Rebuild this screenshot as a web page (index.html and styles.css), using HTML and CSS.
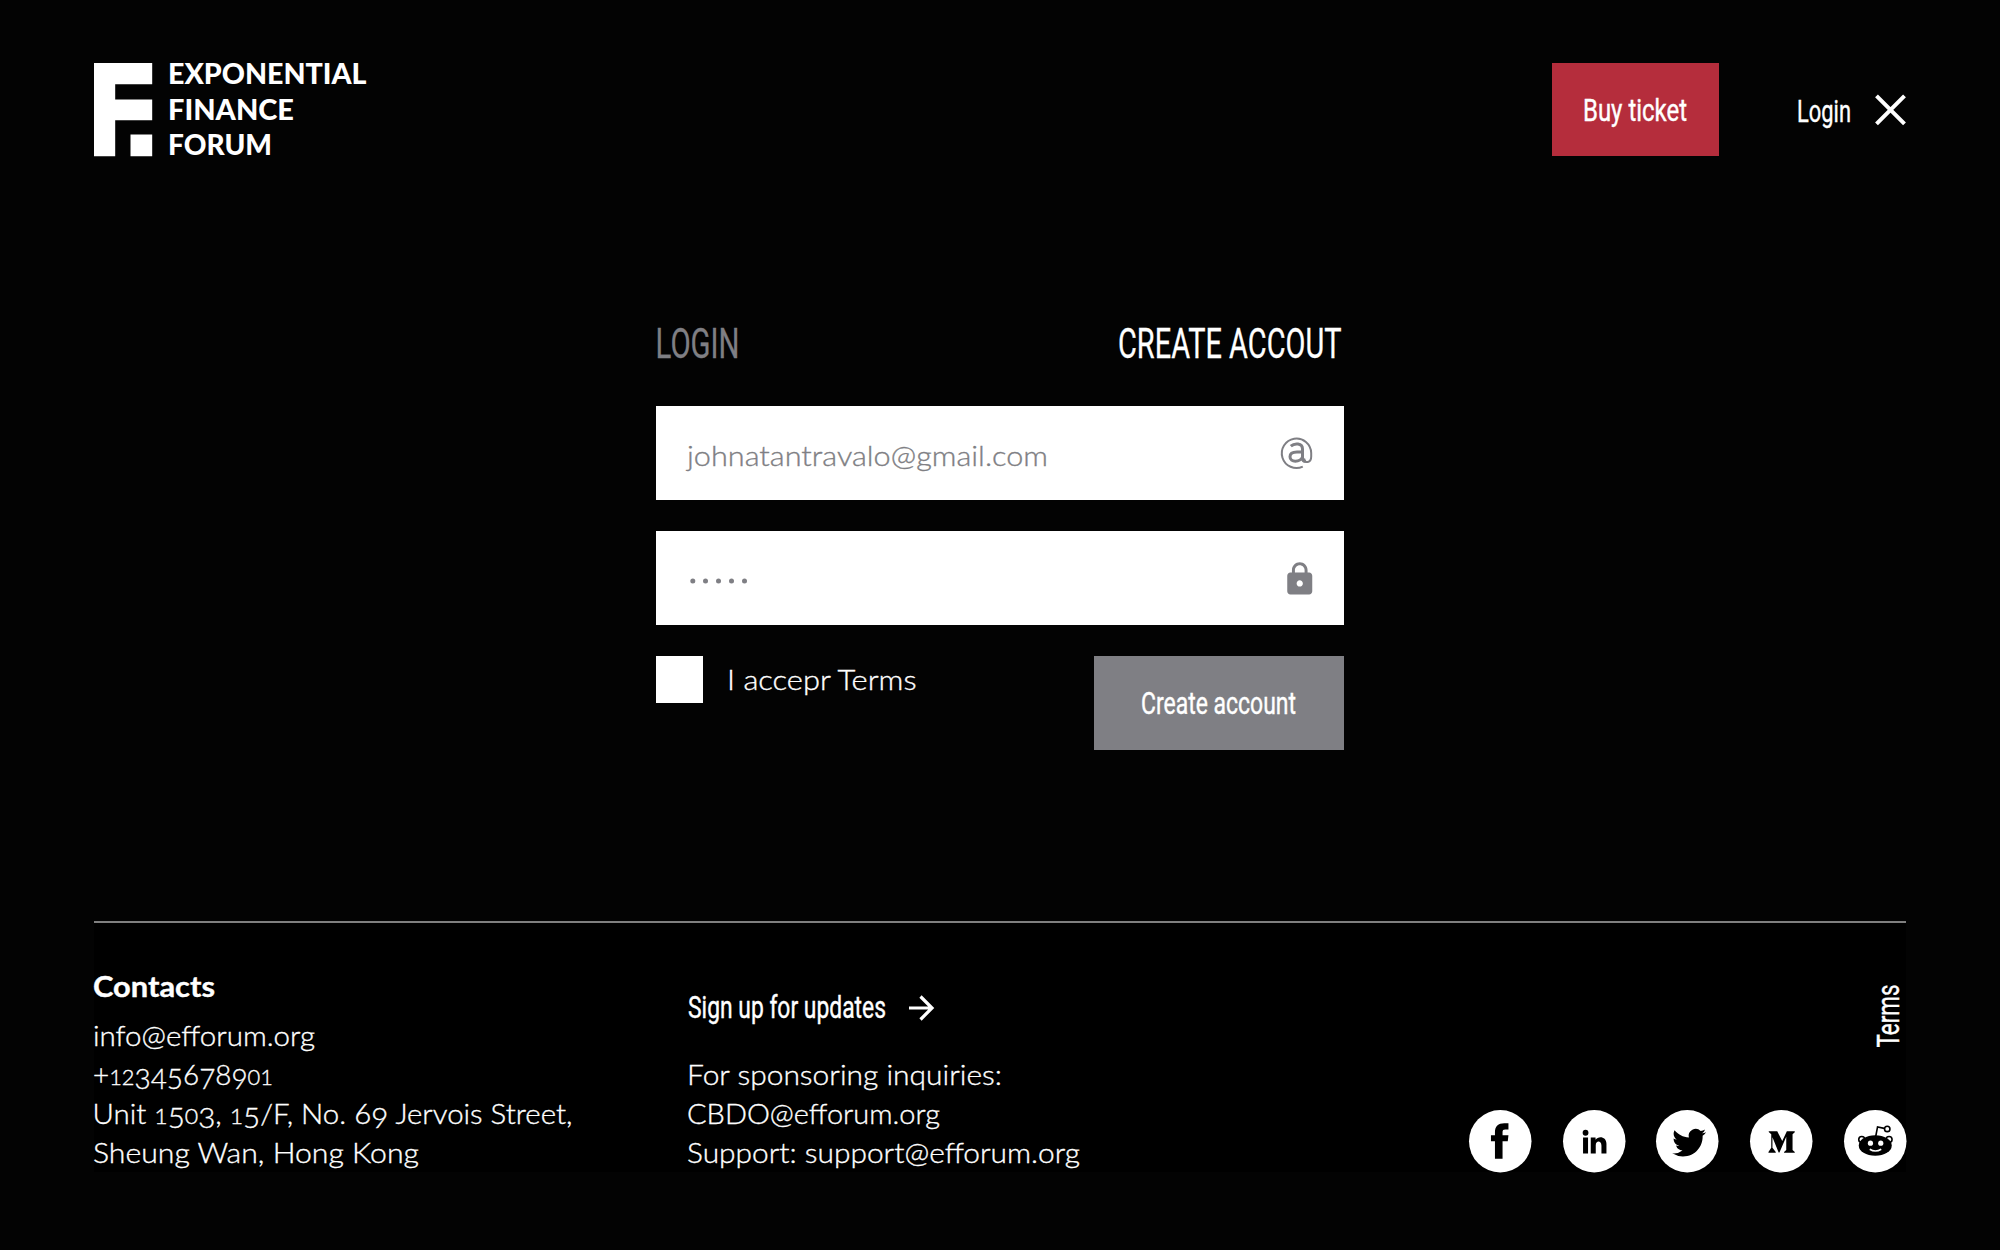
FILE: index.html
```html
<!DOCTYPE html>
<html lang="en">
<head>
<meta charset="utf-8">
<title>Exponential Finance Forum</title>
<link rel="stylesheet" href="styles.css">
</head>
<body>
<header class="header">
  <svg class="logo" width="280" height="94" viewBox="0 0 280 94">
    <path d="M0 0H58.2V21.3H21.2V36.5H58.2V57.2H21.2V93.200H0ZM36.500 71.500H58.200V93.200H36.500Z"/>
    <text x="74" y="20.700" textLength="198.500" lengthAdjust="spacingAndGlyphs">EXPONENTIAL</text>
    <text x="74" y="56.700" textLength="126" lengthAdjust="spacingAndGlyphs">FINANCE</text>
    <text x="74" y="92.200" textLength="104" lengthAdjust="spacingAndGlyphs">FORUM</text>
  </svg>
  <nav class="nav">
    <a class="buy"><svg class="cond" width="104" height="94"><text x="0" y="57.700" textLength="104" lengthAdjust="spacingAndGlyphs">Buy ticket</text></svg></a>
    <a class="login">
      <svg class="cond" width="56" height="94"><text x="0" y="58.700" textLength="54" lengthAdjust="spacingAndGlyphs">Login</text></svg>
      <svg class="close" width="31" height="94"><path d="M1.500 32.800 29.500 60.800M29.500 32.800 1.500 60.800"/></svg>
    </a>
  </nav>
</header>

<main class="form">
  <div class="tabs">
    <svg class="tab muted" width="84" height="86"><text x="-0.500" y="37.500" textLength="84" lengthAdjust="spacingAndGlyphs">LOGIN</text></svg>
    <svg class="tab" width="226" height="86"><text x="0" y="37.500" textLength="223.500" lengthAdjust="spacingAndGlyphs">CREATE ACCOUT</text></svg>
  </div>
  <div class="field">
    <svg class="copy muted" width="366" height="94"><text x="-1" y="59.500" textLength="361" lengthAdjust="spacingAndGlyphs">johnatantravalo@gmail.com</text></svg>
    <svg class="at" width="32" height="94" viewBox="0 0 32 94">
      <path d="M21.800 60.600A14.700 14.700 0 1 1 30.200 47V50.500C30.200 57 23.400 58 23.200 52.500" stroke-width="2"/>
      <path d="M9.800 40.200C13.500 36.900 21.500 36.800 21.500 43.100V51.500C21.500 54.200 22.800 55.600 24.800 55.600M21.500 46H16C11 46 9 48 9 50.700 9 56.800 19 56.500 21.500 51" stroke-width="3"/>
    </svg>
  </div>
  <div class="field">
    <svg class="dots muted" width="66" height="94" viewBox="0 0 66 94"><circle cx="4.800" cy="49.900" r="2.500"/><circle cx="17.500" cy="49.900" r="2.500"/><circle cx="30.500" cy="49.900" r="2.500"/><circle cx="43.500" cy="49.900" r="2.500"/><circle cx="56.500" cy="49.900" r="2.500"/></svg>
    <svg class="lock" width="37.500" height="37.500" viewBox="0 0 24 24"><path d="M18 8h-1V6.500c0-2.760-2.240-5-5-5S7 3.740 7 6.500v1.500H6c-1.100 0-2 .9-2 2v10c0 1.100.9 2 2 2h12c1.100 0 2-.9 2-2V10c0-1.100-.9-2-2-2zm-6 9c-1.100 0-2-.9-2-2s.9-2 2-2 2 .9 2 2-.9 2-2 2zm3.100-9H8.900V6.500c0-1.710 1.390-3.100 3.100-3.100s3.100 1.390 3.100 3.100v1.500z"/></svg>
  </div>
  <div class="actions">
    <label class="accept"><span class="box"></span><svg class="copy" width="190" height="47"><text x="-1" y="34" textLength="189.500" lengthAdjust="spacingAndGlyphs">I accepr Terms</text></svg></label>
    <a class="create"><svg class="cond" width="155" height="94"><text x="0" y="58.200" textLength="155" lengthAdjust="spacingAndGlyphs">Create account</text></svg></a>
  </div>
</main>

<footer class="footer">
  <section class="contacts">
    <svg class="copy strong" width="124" height="52"><text x="-1" y="36.700" textLength="122" lengthAdjust="spacingAndGlyphs">Contacts</text></svg>
    <svg class="copy" width="222" height="39"><text x="-1" y="33.500" textLength="222" lengthAdjust="spacingAndGlyphs">info@efforum.org</text></svg>
    <svg class="copy" width="180" height="39"><text x="-1" y="33.500" textLength="180" lengthAdjust="spacingAndGlyphs">+<tspan class="low">12</tspan><tspan dy="4">345</tspan><tspan dy="-4">6</tspan><tspan dy="4">7</tspan><tspan dy="-4">8</tspan><tspan dy="4">9</tspan><tspan class="low" dy="-4">01</tspan></text></svg>
    <svg class="copy" width="480" height="39"><text x="-1.500" y="33.500" textLength="480" lengthAdjust="spacingAndGlyphs">Unit <tspan class="low">1</tspan><tspan dy="4">5</tspan><tspan class="low" dy="-4">0</tspan><tspan dy="4">3</tspan><tspan dy="-4">, </tspan><tspan class="low">1</tspan><tspan dy="4">5</tspan><tspan dy="-4">/F, No. 6</tspan><tspan dy="4">9</tspan><tspan dy="-4"> Jervois Street,</tspan></text></svg>
    <svg class="copy" width="326" height="39"><text x="-1" y="33.500" textLength="326" lengthAdjust="spacingAndGlyphs">Sheung Wan, Hong Kong</text></svg>
  </section>
  <section class="updates">
    <a class="signup">
      <svg class="cond" width="200" height="91"><text x="0" y="57.500" textLength="198" lengthAdjust="spacingAndGlyphs">Sign up for updates</text></svg>
      <svg class="arrow" width="27" height="91"><path d="M0 48H23M11.500 36.500 23 48 11.500 59.500"/></svg>
    </a>
    <svg class="copy" width="316" height="39"><text x="-1" y="33.500" textLength="315" lengthAdjust="spacingAndGlyphs">For sponsoring inquiries:</text></svg>
    <svg class="copy" width="254" height="39"><text x="-1" y="33.500" textLength="253" lengthAdjust="spacingAndGlyphs">CBDO@efforum.org</text></svg>
    <svg class="copy" width="394" height="39"><text x="-1" y="33.500" textLength="393" lengthAdjust="spacingAndGlyphs">Support: support@efforum.org</text></svg>
  </section>
  <section class="side">
    <svg class="cond terms" width="32" height="66"><text transform="translate(24.500 64.500) rotate(-90)" x="0" y="0" textLength="63" lengthAdjust="spacingAndGlyphs">Terms</text></svg>
    <div class="social">
      <svg viewBox="-31.250 -31.250 62.500 62.500"><circle class="disc" r="31.250"/><path d="M-5.300 17.500V0H-9.300V-6H-5.300V-9C-5.300-15-2-18 4-18H8.200V-11.800H5C3-11.800 2.300-11 2.300-9.300V-6H8.200L7.500 0H2.300V17.500Z"/></svg>
      <svg viewBox="-31.250 -31.250 62.500 62.500"><circle class="disc" r="31.250"/><circle cx="-8.700" cy="-8.500" r="2.900"/><path d="M-11.200-3.700H-6.200V12.300H-11.200ZM-3.500-3.700H1.300V-1.500C4-5.800 12.200-5 12.200 2.500V12.300H7.200V4.500C7.200-1 1.500-1 1.500 4V12.300H-3.500Z"/></svg>
      <svg viewBox="-31.250 -31.250 62.500 62.500"><circle class="disc" r="31.250"/><path transform="translate(-15 -15.500) scale(1.410)" d="M23.953 4.570a10 10 0 01-2.825.775 4.958 4.958 0 002.163-2.723c-.951.555-2.005.959-3.127 1.184a4.920 4.920 0 00-8.384 4.482C7.690 8.095 4.067 6.130 1.640 3.162a4.822 4.822 0 00-.666 2.475c0 1.710.870 3.213 2.188 4.096a4.904 4.904 0 01-2.228-.616v.060a4.923 4.923 0 003.946 4.827 4.996 4.996 0 01-2.212.085 4.936 4.936 0 004.604 3.417 9.867 9.867 0 01-6.102 2.105c-.390 0-.779-.023-1.170-.067a13.995 13.995 0 007.557 2.209c9.053 0 13.998-7.496 13.998-13.985 0-.210 0-.420-.015-.630A9.935 9.935 0 0024 4.590z"/></svg>
      <svg viewBox="-31.250 -31.250 62.500 62.500"><circle class="disc" r="31.250"/><path d="M-12.500-10H-4L1-0.200 5.600-10H13.500V-9L11.300-7V8.800L13.500 10.800V11.500H2.800V10.800L5 8.800V-4.500L-1.800 11.200H-2.600L-8.800-4V6.500L-5.500 10.700V11.500H-12.800V10.700L-10 6.500V-7L-12.500-9.300Z"/></svg>
      <svg viewBox="-31.250 -31.250 62.500 62.500"><circle class="disc" r="31.250"/><g class="ring"><circle cx="-13.500" cy="-1.700" r="3"/><circle cx="13.800" cy="-1.700" r="3"/><circle cx="12" cy="-12.300" r="2.700"/><path d="M.5-5 2.300-14.300 9-12.900"/></g><ellipse cx="0" cy="4.200" rx="16.500" ry="10.200"/><circle class="disc" cx="-4.800" cy="1.900" r="2.600"/><circle class="disc" cx="5.500" cy="1.900" r="2.600"/><path class="smile" d="M-5.500 8Q0 11.500 6 8"/></svg>
    </div>
  </section>
</footer>
</body>
</html>
```
FILE: styles.css
```css
* { box-sizing: border-box; }

body {
  margin: 0;
  padding: 62.5px 93.75px 0;
  height: 1250px;
  background: #030303;
  overflow: hidden;
}

svg { display: block; flex: none; overflow: visible; fill: #fff; }

.header { display: flex; justify-content: space-between; height: 93.75px; }
.logo { font: 900 28.500px Lato, sans-serif; }
.nav { display: flex; gap: 78px; }
.buy {
  display: flex;
  justify-content: center;
  width: 167px;
  background: #b52d3c;
}
.login { display: flex; gap: 22.500px; }
.close { fill: none; stroke: #fff; stroke-width: 4; }

.cond { font: 400 31px Roboto, sans-serif; }
.cond text { stroke: #fff; stroke-width: 0.400; }
.copy { font: 300 28px Lato, sans-serif; }
.copy text { stroke: #fff; stroke-width: 0.350; }
.copy.muted text { stroke: #7f7f84; }
.copy.strong { font-weight: 700; }
.muted { fill: #7f7f84; }
.low { font-size: 22px; }

.form { width: 687.500px; margin: 163.750px auto 0; }
.tabs { display: flex; justify-content: space-between; height: 86.250px; }
.tab { font: 400 43px Roboto, sans-serif; }
.tab text { stroke: #fff; stroke-width: 0.300; }
.tab.muted text { stroke: #7f7f84; }
.field {
  display: flex;
  align-items: center;
  justify-content: space-between;
  height: 93.750px;
  margin-bottom: 31.250px;
  padding: 0 31.250px;
  background: #fff;
}
.at { fill: none; stroke: #7f7f84; }
.lock { fill: #7f7f84; margin: 2px -6.250px 0 0; }

.actions { display: flex; justify-content: space-between; }
.accept { display: flex; gap: 24.500px; }
.box { width: 47px; height: 47px; background: #fff; }
.create {
  display: flex;
  justify-content: center;
  width: 250px;
  height: 93.750px;
  background: #7f7f84;
}

.footer {
  display: flex;
  height: 251px;
  margin-top: 171px;
  border-top: 2px solid #7f7f7f;
  background: #000;
}
.contacts { width: 594px; padding-top: 37px; }
.updates { flex: 1; padding-top: 37px; }
.signup { display: flex; gap: 21px; }
.arrow { fill: none; stroke: #fff; stroke-width: 3.200; }
.side {
  display: flex;
  flex-direction: column;
  align-items: flex-end;
  justify-content: space-between;
  padding-top: 60px;
}
.social { display: flex; gap: 31.250px; }
.social svg { width: 62.500px; height: 62.500px; fill: #000; }
.social .disc { fill: #fff; }
.ring { fill: none; stroke: #000; stroke-width: 1.600; }
.smile { fill: none; stroke: #fff; stroke-width: 1.500; }
```
